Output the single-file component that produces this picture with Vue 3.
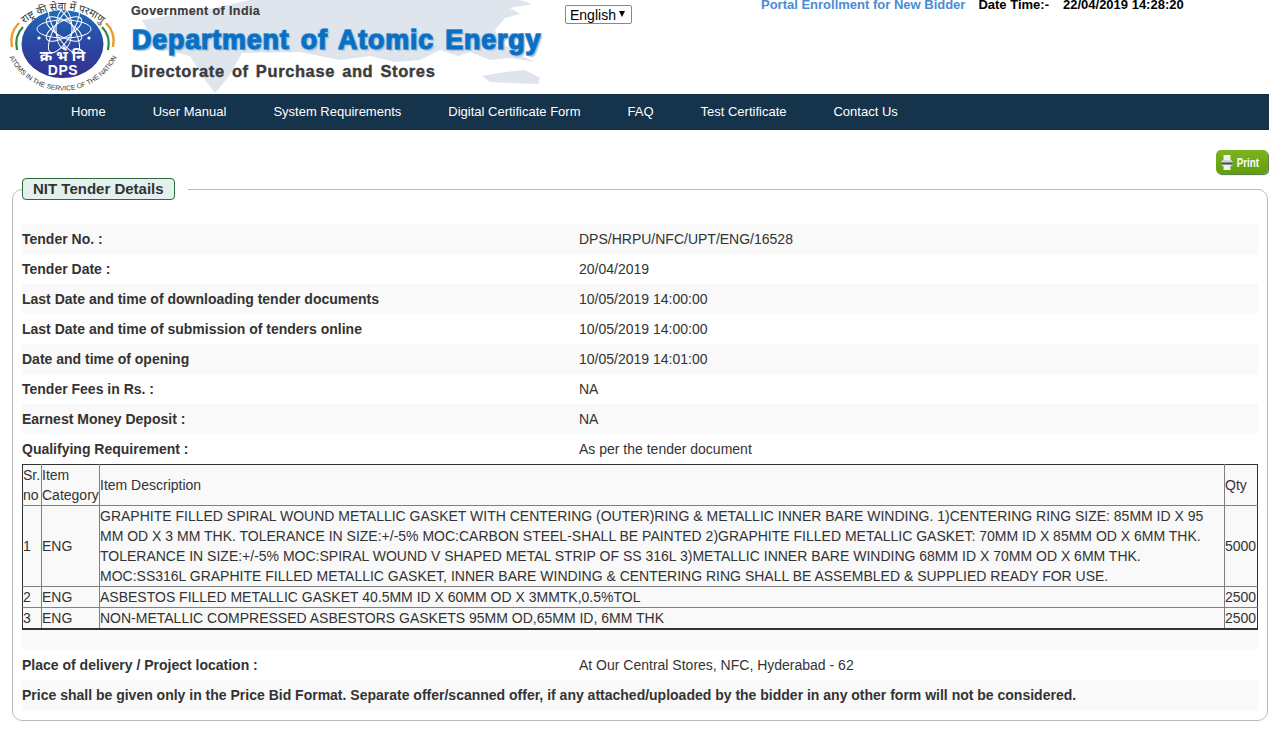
<template>
  <div class="page">
    <header class="top">
      <svg class="map" width="420" height="94" viewBox="131 0 420 94" aria-hidden="true">
        <path d="M142 20 L180 14 L215 8 L250 0 L520 0 L532 4 L510 8 L520 14 L505 18 L495 30 L500 42 L520 55 L535 62 L510 58 L490 60 L470 52 L458 56 L440 50 L420 60 L395 62 L370 56 L340 60 L300 52 L242 53 L230 75 L215 93 L205 80 L190 56 L165 50 L150 35 Z" fill="#dfe5ec" />
        <path d="M482 76 L505 72 L525 70 L540 78 L538 84 L510 83 L490 82 Z" fill="#dfe5ec" />
      </svg>

      <svg class="logo" width="120" height="94" viewBox="0 0 120 94">
        <defs>
          <linearGradient id="discFill" x1="0" y1="0" x2="0" y2="1">
            <stop offset="0" stop-color="#1f6cb8" />
            <stop offset="0.45" stop-color="#2a4aa6" />
            <stop offset="1" stop-color="#34308f" />
          </linearGradient>
          <path id="arcTop" d="M18 30 A60 60 0 0 1 108 30" />
          <path id="arcBottom" d="M7 52 A60 60 0 0 0 119 52" />
        </defs>
        <ellipse cx="62.5" cy="44" rx="41" ry="34" fill="url(#discFill)" />
        <g fill="none" stroke="#fff" stroke-width="1">
          <ellipse cx="64" cy="29" rx="27" ry="9" />
          <ellipse cx="64" cy="29" rx="27" ry="9" transform="rotate(60 64 29)" />
          <ellipse cx="64" cy="29" rx="27" ry="9" transform="rotate(120 64 29)" />
          <ellipse cx="64" cy="29" rx="20" ry="8" transform="rotate(30 64 29)" />
          <ellipse cx="64" cy="29" rx="20" ry="8" transform="rotate(90 64 29)" />
          <ellipse cx="64" cy="29" rx="20" ry="8" transform="rotate(150 64 29)" />
        </g>
        <g fill="#fff">
          <circle cx="39" cy="38" r="1.6" />
          <circle cx="89" cy="38" r="1.6" />
          <circle cx="64" cy="48" r="1.6" />
        </g>
        <path d="M19 23 Q9 33 12 47" fill="none" stroke="#ef9a2d" stroke-width="2.4" />
        <path d="M23 27 Q14 36 17 50" fill="none" stroke="#2d8a3e" stroke-width="2.2" />
        <path d="M106 23 Q116 33 113 47" fill="none" stroke="#ef9a2d" stroke-width="2.4" />
        <path d="M102 27 Q111 36 108 50" fill="none" stroke="#2d8a3e" stroke-width="2.2" />
        <text class="logo-hi" x="62.5" y="61" text-anchor="middle">क्र भं नि</text>
        <text class="logo-dps" x="63" y="75" text-anchor="middle">DPS</text>
        <text class="logo-ring">
          <textPath href="#arcTop" startOffset="50%" text-anchor="middle">राष्ट्र की सेवा में परमाणु</textPath>
        </text>
        <text class="logo-ring logo-ring-en">
          <textPath href="#arcBottom" startOffset="50%" text-anchor="middle">ATOMS IN THE SERVICE OF THE NATION</textPath>
        </text>
      </svg>

      <div class="titles">
        <div class="gov">Government of India</div>
        <div class="dept">Department of Atomic Energy</div>
        <div class="dir">Directorate of Purchase and Stores</div>
      </div>

      <span class="lang-wrap">
        <select class="lang">
          <option>English</option>
        </select>
      </span>

      <div class="portal">
        <a class="enroll">Portal Enrollment for New Bidder</a>
        <span class="dt-label">Date Time:-</span>
        <span class="dt-value">22/04/2019 14:28:20</span>
      </div>
    </header>

    <nav class="nav">
      <a v-for="item in menu" :key="item">{{ item }}</a>
    </nav>

    <main class="content">
      <div class="print-row">
        <button class="print">
          <svg width="12" height="17" viewBox="0 0 12 17">
            <rect x="2.5" y="1" width="7" height="5" fill="#eef1ee" />
            <rect x="0.5" y="6" width="11" height="6" rx="1.5" fill="#cfd6d2" />
            <rect x="0.5" y="8.5" width="11" height="2" fill="#46544b" />
            <rect x="2.5" y="11" width="7" height="5" fill="#eef1ee" />
          </svg>
          <span class="print-label">Print</span>
        </button>
      </div>

      <fieldset class="box">
        <legend><span class="pill">NIT Tender Details</span></legend>

        <div v-for="row in details" :key="row.label" class="row">
          <b>{{ row.label }}</b>
          <span>{{ row.value }}</span>
        </div>

        <table class="items">
          <thead>
            <tr>
              <th class="c-sr">Sr. no</th>
              <th class="c-cat">Item Category</th>
              <th>Item Description</th>
              <th class="c-qty">Qty</th>
            </tr>
          </thead>
          <tbody>
            <tr v-for="item in items" :key="item.sr">
              <td>{{ item.sr }}</td>
              <td>{{ item.cat }}</td>
              <td>{{ item.desc }}</td>
              <td>{{ item.qty }}</td>
            </tr>
          </tbody>
        </table>

        <div class="spacer"></div>
        <div class="row plain">
          <b>Place of delivery / Project location :</b>
          <span>At Our Central Stores, NFC, Hyderabad - 62</span>
        </div>
        <div class="row shaded note">
          <b>Price shall be given only in the Price Bid Format. Separate offer/scanned offer, if any attached/uploaded by the bidder in any other form will not be considered.</b>
        </div>
      </fieldset>
    </main>
  </div>
</template>

<script setup>
const menu = [
  "Home",
  "User Manual",
  "System Requirements",
  "Digital Certificate Form",
  "FAQ",
  "Test Certificate",
  "Contact Us",
];

const details = [
  { label: "Tender No. :", value: "DPS/HRPU/NFC/UPT/ENG/16528" },
  { label: "Tender Date :", value: "20/04/2019" },
  { label: "Last Date and time of downloading tender documents", value: "10/05/2019 14:00:00" },
  { label: "Last Date and time of submission of tenders online", value: "10/05/2019 14:00:00" },
  { label: "Date and time of opening", value: "10/05/2019 14:01:00" },
  { label: "Tender Fees in Rs. :", value: "NA" },
  { label: "Earnest Money Deposit :", value: "NA" },
  { label: "Qualifying Requirement :", value: "As per the tender document" },
];

const items = [
  {
    sr: 1,
    cat: "ENG",
    desc: "GRAPHITE FILLED SPIRAL WOUND METALLIC GASKET WITH CENTERING (OUTER)RING & METALLIC INNER BARE WINDING. 1)CENTERING RING SIZE: 85MM ID X 95 MM OD X 3 MM THK. TOLERANCE IN SIZE:+/-5% MOC:CARBON STEEL-SHALL BE PAINTED 2)GRAPHITE FILLED METALLIC GASKET: 70MM ID X 85MM OD X 6MM THK. TOLERANCE IN SIZE:+/-5% MOC:SPIRAL WOUND V SHAPED METAL STRIP OF SS 316L 3)METALLIC INNER BARE WINDING 68MM ID X 70MM OD X 6MM THK. MOC:SS316L GRAPHITE FILLED METALLIC GASKET, INNER BARE WINDING & CENTERING RING SHALL BE ASSEMBLED & SUPPLIED READY FOR USE.",
    qty: 5000,
  },
  { sr: 2, cat: "ENG", desc: "ASBESTOS FILLED METALLIC GASKET 40.5MM ID X 60MM OD X 3MMTK,0.5%TOL", qty: 2500 },
  { sr: 3, cat: "ENG", desc: "NON-METALLIC COMPRESSED ASBESTORS GASKETS 95MM OD,65MM ID, 6MM THK", qty: 2500 },
];
</script>

<style>
body {
  background: #fff;
  overflow: hidden;
}
</style>

<style scoped>
.page {
  font-family: "Liberation Sans", Arial, sans-serif;
  font-size: 14px;
  line-height: 20px;
  color: #333;
}

.top {
  position: relative;
  height: 94px;
  display: flex;
  align-items: flex-start;
  overflow: hidden;
}

.map {
  position: absolute;
  left: 131px;
  top: 0;
}

.logo {
  position: relative;
  flex: none;
}

.logo-hi {
  font: bold 15px "Noto Sans", "DejaVu Sans", sans-serif;
  fill: #fff;
}

.logo-dps {
  font: bold 14px "Liberation Sans", sans-serif;
  letter-spacing: 0.6px;
  fill: #fff;
}

.logo-ring {
  font: 10.5px "Noto Sans", "DejaVu Sans", sans-serif;
  fill: #333;
}

.logo-ring-en {
  font: 6.8px "Liberation Sans", sans-serif;
}

.titles {
  position: relative;
  margin-left: 11px;
  width: 434px;
  flex: none;
  font-family: "Liberation Sans", sans-serif;
  font-weight: bold;
  color: #3c3c3c;
  white-space: nowrap;
}

.gov {
  font-size: 12.5px;
  line-height: 14px;
  margin-top: 4px;
  letter-spacing: 0.4px;
  -webkit-text-stroke: 0.2px #3c3c3c;
}

.dept {
  font-size: 27px;
  line-height: 34px;
  margin: 5px 0 0 1px;
  color: #0a6fc2;
  -webkit-text-stroke: 1px #0a6fc2;
  letter-spacing: 0.75px;
  word-spacing: 3px;
  text-shadow: 1px 1px 0 #8fc3ec, -1px -1px 0 #8fc3ec, 1px -1px 0 #8fc3ec, -1px 1px 0 #8fc3ec, 2px 2px 1px #b9c4cf;
}

.dir {
  font-size: 16.5px;
  line-height: 18px;
  margin-top: 5px;
  letter-spacing: 0.6px;
  word-spacing: 2px;
  -webkit-text-stroke: 0.4px #3c3c3c;
}

.lang-wrap {
  position: relative;
  margin-top: 5px;
  flex: none;
  height: 19px;
}

.lang-wrap::after {
  content: "";
  position: absolute;
  left: 54px;
  top: 6px;
  border-left: 3px solid transparent;
  border-right: 3px solid transparent;
  border-top: 6px solid #000;
  pointer-events: none;
}

.lang {
  display: block;
  appearance: none;
  margin: 0;
  width: 67px;
  height: 19px;
  font: 14px "Liberation Sans", sans-serif;
  color: #000;
  background: #fff;
  border: 1px solid #888;
  border-radius: 2px;
  padding: 0 0 0 4px;
}

.portal {
  margin: -5px 0 0 129px;
  white-space: nowrap;
  font-weight: bold;
  font-size: 13px;
  color: #000;
}

.enroll {
  color: #4a8cd6;
  margin-right: 13px;
}

.dt-label {
  margin-right: 14px;
}

.nav {
  height: 36px;
  background: #15334a;
  display: flex;
  align-items: center;
  padding: 0 0 1px 47.5px;
  box-sizing: border-box;
  font-size: 13px;
}

.nav a {
  padding: 0 23.5px;
  color: #fff;
  white-space: nowrap;
}

.content {
  padding: 20px 1px 13px 12px;
}

.print-row {
  display: flex;
  justify-content: flex-end;
  height: 28px;
}

.print {
  width: 52px;
  height: 24px;
  padding: 0;
  border: 0;
  border-radius: 5px;
  background: linear-gradient(#7bb51f, #5f9e0c);
  box-shadow: 1px 1px 1px #55703a;
  color: #fff;
  font: bold 13px "Liberation Sans", sans-serif;
  display: flex;
  align-items: center;
  justify-content: center;
  gap: 0;
}

.print-label {
  display: inline-block;
  transform: scaleX(0.75);
}

.box {
  margin: 0;
  padding: 24px 9px 10px;
  border: 1px solid #bbb;
  border-radius: 10px;
  min-width: 0;
}

legend {
  padding: 0 13px 0 0;
}

.pill {
  display: block;
  padding: 0 10px;
  height: 22px;
  line-height: 20px;
  box-sizing: border-box;
  font-size: 15px;
  font-weight: bold;
  color: #333;
  background: #e4f0ee;
  border: 1px solid #2d6a3a;
  border-radius: 4px;
}

.row {
  display: grid;
  grid-template-columns: 557px 1fr;
  height: 30px;
  align-items: center;
}

.row:nth-of-type(odd) {
  background: #f9f9f9;
}

.row.plain {
  background: none;
}

.row.shaded {
  background: #f9f9f9;
}

.note {
  display: block;
  line-height: 30px;
}

.items {
  width: 100%;
  border-collapse: collapse;
  border: 1px solid #333;
  border-bottom-width: 2px;
  table-layout: fixed;
}

.items th,
.items td {
  box-sizing: border-box;
  border: 1px solid #808080;
  padding: 0;
  font-weight: normal;
  text-align: left;
  background: #f9f9f9;
}

.items tr > :first-child {
  border-left-color: #333;
}

.items tr > :last-child {
  border-right-color: #333;
}

.items thead th {
  border-top-color: #333;
}

.items tbody tr:last-child td {
  border-bottom: 2px solid #333;
}

.c-sr {
  width: 19px;
}

.c-cat {
  width: 58px;
}

.c-qty {
  width: 33px;
}

.spacer {
  height: 20px;
  background: #f9f9f9;
}
</style>
